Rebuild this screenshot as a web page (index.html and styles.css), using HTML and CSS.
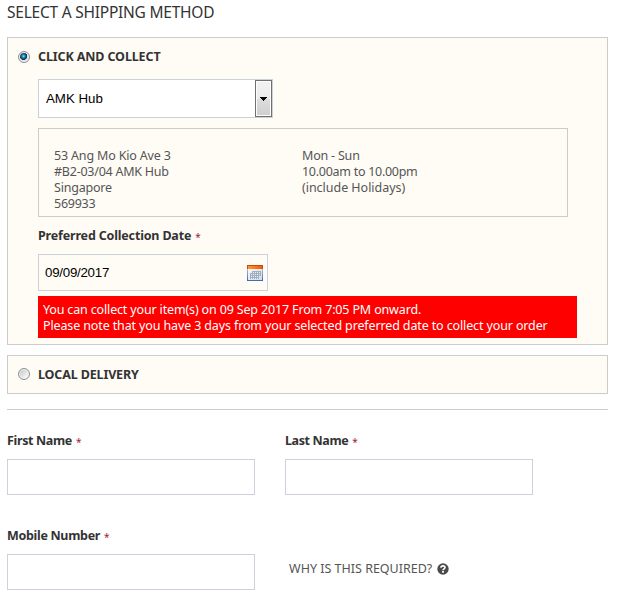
FILE: index.html
```html
<!DOCTYPE html>
<html lang="en">
<head>
<meta charset="utf-8">
<title>Shipping method</title>
<link rel="stylesheet" href="styles.css">
</head>
<body>
<main class="page">
  <h1 class="title"><span class="t-title">SELECT A SHIPPING METHOD</span></h1>

  <section class="panel panel-collect">
    <div class="option"><span class="radio radio-on"></span><span class="option-name t-click">CLICK AND COLLECT</span></div>
    <div class="panel-body">
      <div class="select">
        <span class="select-value">AMK Hub</span>
        <span class="select-button"><svg width="7" height="4" viewBox="0 0 7 4" shape-rendering="crispEdges"><path d="M0 0h7v1h-1v1h-1v1h-1v1h-1v-1h-1v-1h-1v-1h-1z"/></svg></span>
      </div>
      <div class="store">
        <div class="store-address"><span class="t-a1">53 Ang Mo Kio Ave 3</span><br><span class="t-a2">#B2-03/04 AMK Hub</span><br><span class="t-a3">Singapore</span><br><span class="t-a4">569933</span></div>
        <div class="store-hours"><span class="t-h1">Mon - Sun</span><br><span class="t-h2">10.00am to 10.00pm</span><br><span class="t-h3">(include Holidays)</span></div>
      </div>
      <div class="label label-date"><span class="t-date">Preferred Collection Date</span><span class="req">*</span></div>
      <div class="date">
        <span class="t-value">09/09/2017</span>
        <svg width="16" height="16" viewBox="0 0 16 16" shape-rendering="crispEdges">
          <defs>
            <linearGradient id="top" x2="1"><stop stop-color="#ff9a2c"/><stop offset="1" stop-color="#f4590d"/></linearGradient>
            <linearGradient id="sheet" x2="1" y2="1"><stop stop-color="#f8fafc"/><stop offset="1" stop-color="#c8dcf0"/></linearGradient>
            <linearGradient id="edge" x2="0" y2="1"><stop stop-color="#a9bce0"/><stop offset="1" stop-color="#4466aa"/></linearGradient>
          </defs>
          <path fill="url(#edge)" d="M0 4h16v12H0z"/>
          <path fill="url(#sheet)" d="M1 4h14v11H1z"/>
          <path fill="#c64a16" d="M0 0h16v4H0z"/>
          <path fill="url(#top)" d="M1 1h14v3H1z"/>
          <path fill="#a3adbb" d="M5 6h9v5H5zM3 8h2v6H3zM5 11h7v3H5z"/>
          <path stroke="#e5edf5" stroke-dasharray="1 1" d="M4 7.5h10M4 9.5h10M4 11.5h10M4 13.5h8"/>
        </svg>
      </div>
      <div class="notice"><span class="t-n1">You can collect your item(s) on 09 Sep 2017 From 7:05 PM onward.</span><br><span class="t-n2">Please note that you have 3 days from your selected preferred date to collect your order</span></div>
    </div>
  </section>

  <section class="panel panel-delivery">
    <div class="option"><span class="radio"></span><span class="option-name t-local">LOCAL DELIVERY</span></div>
  </section>

  <hr class="rule">

  <div class="fields">
    <div class="field"><div class="label"><span class="t-first">First Name</span><span class="req">*</span></div><div class="input"></div></div>
    <div class="field"><div class="label"><span class="t-last">Last Name</span><span class="req">*</span></div><div class="input"></div></div>
    <div class="field"><div class="label"><span class="t-mobile">Mobile Number</span><span class="req">*</span></div><div class="input"></div></div>
    <div class="why"><span class="t-why">WHY IS THIS REQUIRED?</span>
      <svg width="12" height="12" viewBox="0 0 12 12"><circle cx="6" cy="6" r="5.7" fill="#4a4a4a"/><path d="M4 4.7C4 2.3 8 2.3 8 4.5 8 5.8 6 5.8 6 7.3" fill="none" stroke="#fff" stroke-width="1.6"/><path fill="#fff" d="M5.1 8.1h1.8v1.6H5.1z"/></svg>
    </div>
  </div>
</main>
</body>
</html>
```
FILE: styles.css
```css
* { box-sizing: border-box; }
body { margin: 0; background: #fff; color: #555; font: 12.5px/16px "Noto Sans", sans-serif; }
.page { width: 601px; margin-left: 7px; }
span { white-space: nowrap; }

.title { height: 37px; margin: 0; padding-top: 2px; color: #333; font-size: 15.5px; line-height: 20px; font-weight: 400; }

.panel { border: 1px solid #ccc; background: #fffcf5; }
.panel-collect { height: 308px; }
.panel-delivery { height: 39px; margin-top: 10px; }
.option { display: flex; align-items: center; height: 37px; padding-left: 10px; color: #333; font-weight: 700; }
.radio { width: 12px; height: 12px; margin-right: 8px; border: 1px solid #8e8f8f; border-radius: 50%; background: linear-gradient(135deg, #bbc0c5, #f4f4f4 75%); box-shadow: inset 0 0 0 1px #f4f4f4; }
.radio-on { background: radial-gradient(circle at 45% 42%, #8fd8f5 0, #2489b8 1.5px, #103c5c 3px, #103c5c 3.5px, #dfe4e8 4px); }
.panel-delivery .radio { margin-top: -1px; }

.panel-body { padding: 4px 0 0 30px; }
.select { display: flex; justify-content: space-between; width: 235px; height: 39px; border: 1px solid #ccd1dc; background: #fff; color: #000; font: 13.3px/37px "Liberation Sans", sans-serif; }
.select-value { padding-left: 7px; }
.select-button { display: flex; align-items: center; justify-content: center; width: 17px; height: 37px; border: 1px solid #707070; background: linear-gradient(#f2f2f2, #ebebeb 50%, #ddd 50%, #cfcfcf); box-shadow: inset 0 0 0 1px #fcfcfc; }

.store { display: flex; width: 530px; height: 89px; margin-top: 10px; padding: 19px 0 0 15px; border: 1px solid #ccc; }
.store-address { width: 248px; }

.label { display: flex; height: 16px; color: #333; font-weight: 700; }
.label-date { margin-top: 11px; }
.req { margin-left: 4px; color: #a3173c; font-size: 10px; line-height: 19px; font-weight: 400; }
.date { display: flex; align-items: center; justify-content: space-between; width: 230px; height: 37px; margin-top: 10px; padding: 0 4px 0 6px; border: 1px solid #ccd1dc; color: #000; font-family: "Liberation Sans", sans-serif; font-size: 13.3px; }
.notice { width: 539px; height: 42px; margin-top: 5px; padding: 6px 0 0 5px; background: #f00; color: #fff; }

.rule { height: 1px; margin: 15px 0 0; border: 0; background: #ccc; }

.fields { display: grid; grid-template-columns: 248px 248px; column-gap: 30px; row-gap: 32px; margin-top: 23px; }
.input { height: 36px; margin-top: 10px; border: 1px solid #ccd1dc; background: #fff; }
.fields .field:nth-child(-n+2) { height: 62px; }
.fields { row-gap: 33px; }
.why { display: flex; align-items: center; gap: 5px; height: 16px; margin: 33px 0 0 4px; }

/* Tracking per text run */
.t-title { letter-spacing: -.23px; }
.t-click { letter-spacing: -.12px; }
.t-a1 { letter-spacing: -.17px; }
.t-a2 { letter-spacing: -.24px; }
.t-a3 { letter-spacing: -.2px; }
.t-a4 { letter-spacing: -.25px; }
.t-h1 { letter-spacing: -.2px; }
.t-h2 { letter-spacing: -.28px; }
.t-h3 { letter-spacing: -.03px; }
.t-date { letter-spacing: -.17px; }
.t-value { letter-spacing: -.25px; }
.t-n1 { letter-spacing: -.155px; }
.t-n2 { letter-spacing: -.13px; }
.t-local { letter-spacing: -.14px; }
.t-first { letter-spacing: -.35px; }
.t-last { letter-spacing: -.38px; }
.t-mobile { letter-spacing: -.31px; }
```
